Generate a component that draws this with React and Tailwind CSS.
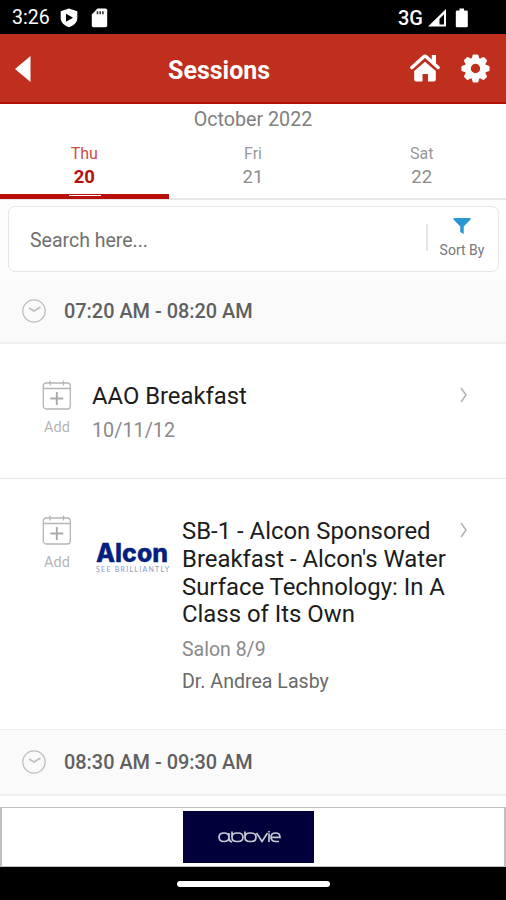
const days = [
  { name: "Thu", date: 20, active: true },
  { name: "Fri", date: 21 },
  { name: "Sat", date: 22 },
];

const StatusBar = () => (
  <div className="flex h-[34px] shrink-0 items-center bg-black pt-[1px] text-white">
    <span className="ml-[12px] w-[48px] text-[19.500px] leading-none">3:26</span>
    <svg className="h-5 w-[18px]" viewBox="0 0 18 20">
      <path fill="#fff" d="M9 0.5 17.3 3.2V10c0 4.6-3.6 7.6-8.3 9.3C4.300 17.600.7 14.600.7 10V3.200z" />
      <path fill="#000" d="m6 5.800 7 4-7 4z" />
    </svg>
    <svg className="ml-[13px] h-5 w-[17px]" viewBox="0 0 17 20">
      <path fill="#fff" d="M6.500.5H14.500q1.700 0 1.700 1.700V17.500q0 1.700-1.700 1.700H2.500Q.8 19.200.8 17.500V6.500z" />
      <path stroke="#333" strokeWidth="1.600" d="M6.500 3.200v3M9.200 3.200v3M11.900 3.200v3" />
    </svg>
    <span className="ml-auto text-[20px] font-medium leading-none">3G</span>
    <svg className="ml-[5px] h-5 w-[19px]" viewBox="0 0 19 20">
      <path fill="#fff" fillRule="evenodd" d="M18 1V18.500H0zM16 6.200 11.500 10.700V16.500H16z" />
    </svg>
    <svg className="ml-[8px] mr-[37px] h-5 w-[14px]" viewBox="0 0 14 20">
      <path fill="#fff" d="M4.500.5h4.500v2h2.500q1.300 0 1.300 1.300V18q0 1.300-1.300 1.300H2Q.8 19.300.8 18V3.800q0-1.300 1.200-1.300h2.500z" />
    </svg>
  </div>
);

const Header = () => (
  <div className="flex h-[70px] shrink-0 items-center border-b-2 border-[#b30f08] bg-[#c02e1d] text-white">
    <svg className="ml-[15px] mt-[2px] h-[26px] w-4" viewBox="0 0 16 26">
      <path fill="#fff" d="M0 13 15.500 0v26z" />
    </svg>
    <h1 className="ml-[137px] mt-[5px] text-[25px] font-bold leading-none">Sessions</h1>
    <svg className="ml-auto mr-px h-7 w-[30px]" viewBox="0 0 30 28">
      <path fill="#fff" d="M15 7.800 25.800 17V25.500q0 2-2 2H18V20h-5.500v7.500H6.200q-2 0-2-2V17z" />
      <path fill="#fff" d="M21.800 1H26V10l-4.200-3.500z" />
      <path fill="none" stroke="#fff" strokeWidth="3.400" strokeLinecap="round" strokeLinejoin="round" d="M1.900 13.500 13.800 2.700q1.200-1 2.400 0L28.100 13.500" />
    </svg>
    <svg className="ml-[20px] mr-[16px] h-[29px] w-[29px]" viewBox="-14.500 -14.500 29 29">
      {[0, 45, 90, 135, 180, 225, 270, 315].map((deg) => (
        <path key={deg} fill="#fff" transform={`rotate(${deg})`} d="M-4.300-8.500 -2.800-13.200q.3-.9 1.200-.9h3.200q.9 0 1.200.9L4.300-8.500z" />
      ))}
      <circle r="7.700" fill="none" stroke="#fff" strokeWidth="6" />
    </svg>
  </div>
);

const DayTabs = () => (
  <div className="h-[96px] shrink-0 border-b-2 border-[#e6e6e6] bg-white">
    <p className="pt-[6px] text-center text-[19.700px] leading-5 text-[#808080]">October 2022</p>
    <div className="mt-[11px] grid h-[58px] grid-cols-3 text-center">
      {days.map((day) =>
        day.active ? (
          <div key={day.name} className="relative border-b-5 border-[#b90f0a]">
            <p className="pt-[3px] text-[16px] leading-5 text-[#d04a45]">{day.name}</p>
            <p className="pt-[2px] text-[18.500px] font-bold leading-[22px] text-[#b5120e]">{day.date}</p>
            <span className="absolute -bottom-[2px] left-[69px] h-px w-8 bg-white" />
          </div>
        ) : (
          <div key={day.name}>
            <p className="pt-[3px] text-[16px] leading-5 text-[#999]">{day.name}</p>
            <p className="pt-[2px] text-[18.500px] leading-[22px] text-[#8c8c8c]">{day.date}</p>
          </div>
        )
      )}
    </div>
  </div>
);

const SearchBar = () => (
  <div className="h-[80px] shrink-0 bg-[#fdfdfd] px-[8px] pt-[6px] pr-[7px]">
    <div className="flex h-[66px] items-center rounded-[7px] border border-[#e6e6e6] bg-white">
      <span className="ml-[21px] mt-[3px] text-[19.500px] text-[#707070]">Search here...</span>
      <span className="mb-[4px] ml-auto h-[27px] w-[2px] bg-[#e6e6e6]" />
      <div className="mr-[13px] flex w-[46px] shrink-0 flex-col items-center ml-[11px]">
        <svg className="h-[17px] w-[18px]" viewBox="0 0 18 17">
          <path fill="#2796d3" d="M.5 0h17v1.500L10.700 8.500V16L7.300 14V8.500L.5 1.500z" />
        </svg>
        <span className="mt-[5px] whitespace-nowrap text-[14px] leading-5 text-[#777]">Sort By</span>
      </div>
    </div>
  </div>
);

const TimeHeader = ({ time, className }) => (
  <div className={`flex shrink-0 items-center border-b-2 border-[#eee] bg-[#fafafa] ${className}`}>
    <svg className="ml-[22px] h-6 w-6" viewBox="0 0 24 24" fill="none" stroke="#bcbcbc" strokeWidth="1.200">
      <circle cx="12" cy="12" r="11.200" />
      <path d="m7 9 5 3 6.500-4" strokeWidth="1.500" />
    </svg>
    <span className="ml-[18px] pt-[2px] text-[19.900px] font-medium text-[#606060]">{time}</span>
  </div>
);

const AddButton = () => (
  <button className="ml-[42px] flex w-[30px] shrink-0 flex-col items-center">
    <svg className="h-[30px] w-[30px]" viewBox="0 0 30 30" fill="none" stroke="#b5b5b5" strokeWidth="1.300">
      <rect x="1.300" y="3" width="27" height="26" rx="3" />
      <path d="M1.500 8.500H28M8 .5V5.500M21.500.5V5.500" />
      <path d="M14.800 12v13M8.300 18.500h13" strokeWidth="1.900" stroke="#aaa" />
    </svg>
    <span className="mt-[8px] text-[14.500px] leading-5 text-[#b5b5b5]">Add</span>
  </button>
);

const Chevron = () => (
  <svg className="absolute right-[37px] top-[42px] h-[18px] w-[10px]" viewBox="0 0 10 18" fill="none" stroke="#b0b0b0" strokeWidth="1.500">
    <path d="m2 2 5 7L2 16" />
  </svg>
);

const AlconLogo = () => (
  <div className="ml-[23px] mt-[25px] w-[75px] shrink-0">
    <svg className="block h-[27px] w-[75px] overflow-visible" viewBox="0 0 75 27">
      <text x="1" y="21.500" fill="#04207f" stroke="#04207f" strokeWidth=".3" fontFamily="Inter, sans-serif" fontWeight="800" fontSize="25.500" textLength="72" lengthAdjust="spacingAndGlyphs">Alcon</text>
    </svg>
    <svg className="block h-[9px] w-[75px] overflow-visible" viewBox="0 0 75 9">
      <text x="1" y="5" fill="#8d96c6" fontFamily="Lato, sans-serif" fontSize="7" textLength="73">SEE BRILLIANTLY</text>
    </svg>
  </div>
);

const AbbvieLogo = () => (
  <svg className="h-[52px] w-[131px] bg-[#01003b]" viewBox="0 0 131 52">
    <g fill="none" stroke="#c9c9d4" strokeWidth="1.700">
      <path d="M46 22v5q0 3.500 3 4M46 26.300q0 4.200-5 4.200t-5-4.200 5-4.300 5 4.300" />
      <path d="M49 20.500v6q0 4 5 4h1q5 0 5-4.200 0-4.300-5-4.300h-1q-5 0-5 4.300" />
      <path d="M62 20.500v6q0 4 5 4h1q5 0 5-4.200 0-4.300-5-4.300h-1q-5 0-5 4.300" />
      <path d="m73.500 22 5.500 8.500 5.500-8.500M86 22.500v8.500M86 20v1.500M96 30.500h-3q-5 0-5-4.200 0-4.300 4.500-4.300 4.500 0 4.500 4.300H88" />
    </g>
  </svg>
);

export default function App() {
  return (
    <div className="flex h-[900px] w-[506px] flex-col overflow-hidden bg-white font-[Roboto,sans-serif]">
      <StatusBar />
      <Header />
      <DayTabs />
      <SearchBar />
      <TimeHeader time="07:20 AM - 08:20 AM" className="h-[64px]" />
      <div className="relative flex h-[135px] shrink-0 items-start border-b border-[#e8e8e8] pt-[36px]">
        <AddButton />
        <div className="ml-[20px]">
          <h2 className="-mt-px text-[23.800px] leading-[34px] text-[#1c1c1c]">AAO Breakfast</h2>
          <p className="mt-[6px] text-[19.800px] leading-6 text-[#8a8a8a]">10/11/12</p>
        </div>
        <Chevron />
      </div>
      <div className="relative flex h-[250px] shrink-0 items-start pt-[36px]">
        <AddButton />
        <AlconLogo />
        <div className="ml-[12px] w-[275px] pt-[3px]">
          <h2 className="text-[23.900px] leading-[27.800px] text-[#1c1c1c]">
            SB-1 - Alcon Sponsored
            <br />
            Breakfast - Alcon's Water
            <br />
            Surface Technology: In A
            <br />
            Class of Its Own
          </h2>
          <p className="mt-[9px] text-[19.500px] leading-6 text-[#8a8a8a]">Salon 8/9</p>
          <p className="mt-[8px] text-[19.600px] leading-6 text-[#6a6a6a]">Dr. Andrea Lasby</p>
        </div>
        <Chevron />
      </div>
      <TimeHeader time="08:30 AM - 09:30 AM" className="h-[67px] border-t" />
      <div className="mt-[11px] flex h-[60px] shrink-0 items-center border-y border-x-2 border-[#bfc1c1] bg-white pl-[181px]">
        <AbbvieLogo />
      </div>
      <div className="flex grow items-center justify-center bg-black">
        <span className="h-[6px] w-[153px] rounded-full bg-white" />
      </div>
    </div>
  );
}
